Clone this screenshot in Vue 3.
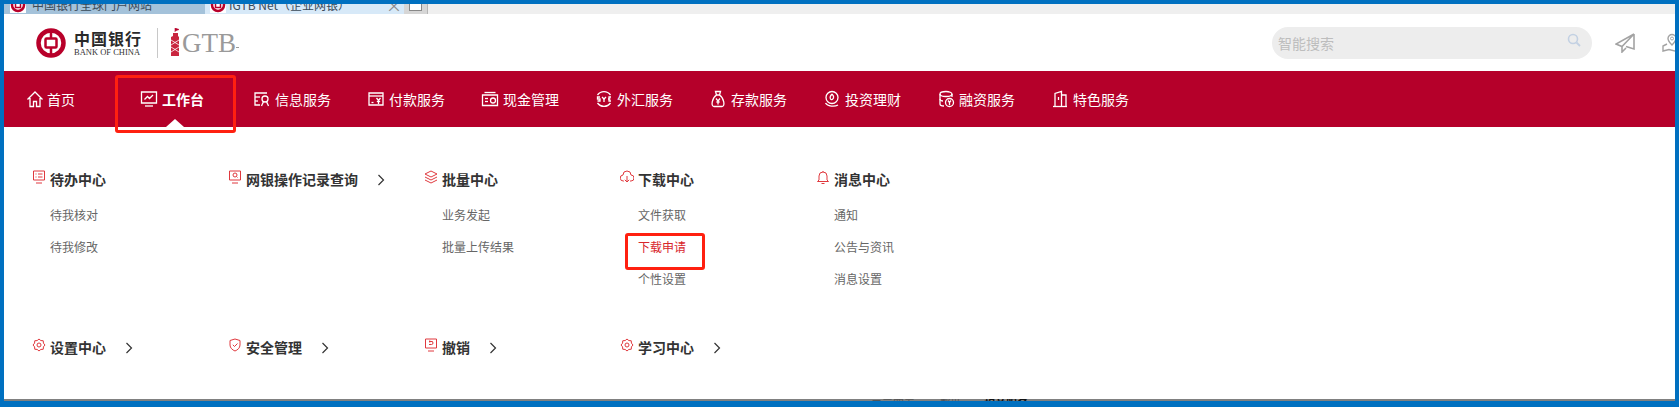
<script setup>
const gear = ['M13 7L11.430 8.840 11.240 11.240 8.840 11.430 7 13 5.160 11.430 2.760 11.240 2.570 8.840 1 7 2.570 5.160 2.760 2.760 5.160 2.570 7 1 8.840 2.570 11.240 2.760 11.430 5.160z', 'M5 7a2 2 0 1 0 4 0a2 2 0 1 0-4 0']

const navItems = [
  { label: '信息服务', icon: ['M14 3H2v12h5', 'M2 7h5', 'M2 11h3', 'M9 9a3 3 0 1 0 6 0a3 3 0 1 0-6 0', 'M8.500 16l2-4.500', 'M15.500 16l-2-4.500'] },
  { label: '付款服务', icon: ['M2 3h14v12H2z', 'M2 6h14', 'M4.500 12.500h2', 'M9.500 8l2 2.500 2-2.500', 'M11.500 10.500V14', 'M9.800 11.500h3.400'] },
  { label: '现金管理', icon: ['M3.500 2.500h11', 'M1.500 5h15v10.500h-15z', 'M4 8.500h3', 'M4 11.500h3', 'M9.500 10.500a2.500 2.500 0 1 0 5 0a2.500 2.500 0 1 0-5 0'] },
  { label: '外汇服务', icon: ['M2.500 5a8 8 0 0 1 13 0', 'M2.500 13a8 8 0 0 0 13 0', 'M5 7H2.500v2H5v2H2.500', 'M7 7l2 2 2-2', 'M9 9v3', 'M16 7h-2v4h2', 'M13 9h2.500'] },
  { label: '存款服务', icon: ['M6.500 1.500h5l-1 3.500h-3z', 'M7.500 5C3 8 1.500 16.500 5 16.500h8c3.500 0 2-8.500-2.500-11.500', 'M7 8.500l2 2.500 2-2.500', 'M9 11v3.500', 'M7.300 12h3.400'] },
  { label: '投资理财', icon: ['M3 7.500a6 6 0 1 1 12 0a6 6 0 0 1-12 0', 'M9 4c-2 2-2.500 3-1.500 5 1 1.500 2.500 0 3-1', 'M9 4c1.500 1.500 2 2.500 1.500 4', 'M2.500 13c2 3.500 9 4 12.500 2'] },
  { label: '融资服务', icon: ['M3 4a6 2.500 0 1 0 12 0a6 2.500 0 1 0-12 0', 'M3 4v10c0 1.200 2 2 4 2', 'M3 9c0 1 1.500 2 3 2', 'M15 4v3', 'M8.500 12.500a4 4 0 1 0 8 0a4 4 0 1 0-8 0', 'M11 10.500l1.500 2 1.500-2', 'M12.500 12.500v2.500'] },
  { label: '特色服务', icon: ['M2 16.500h14', 'M4 16.500V3.500l6.500-2v15', 'M10.500 5H15v11.500', 'M7.500 7v3'] },
]

const sections = [
  { title: '待办中心', icon: ['M1.500 1h11v9h-11z', 'M4 13h6', 'M3.500 4h1', 'M6 4h4.500', 'M3.500 7h1', 'M6 7h4.500'], links: ['待我核对', '待我修改'] },
  { title: '网银操作记录查询', more: true, icon: ['M1.500 1h11v9h-11z', 'M4 13h6', 'M5 5a2 2 0 1 0 4 0a2 2 0 1 0-4 0', 'M8.500 6.500l1 1'], links: [] },
  { title: '批量中心', icon: ['M7 1l6 3-6 3-6-3z', 'M1 7l6 3 6-3', 'M1 10l6 3 6-3'], links: ['业务发起', '批量上传结果'] },
  { title: '下载中心', icon: ['M4 11H3.500a3 3 0 0 1-.5-6 4 4 0 0 1 8 0 3 3 0 0 1 0 6H10', 'M7 6v6', 'M4.800 9.800L7 12l2.200-2.200'], links: ['文件获取', '下载申请', '个性设置'], active: '下载申请' },
  { title: '消息中心', icon: ['M3 10V6a4 4 0 0 1 8 0v4l1.500 1.500h-11z', 'M5.500 13.500h3', 'M7 2V1'], links: ['通知', '公告与资讯', '消息设置'] },
  { title: '设置中心', more: true, icon: gear, links: [] },
  { title: '安全管理', more: true, icon: ['M7 1l5 1.500V7c0 3-2.500 5-5 6-2.500-1-5-3-5-6V2.500z', 'M4.800 6.800L6.500 8.500l3-3'], links: [] },
  { title: '撤销', more: true, icon: ['M1.500 1h11v9h-11z', 'M4 13h6', 'M5 3.500h3.500', 'M5 3.500l1.200-1', 'M5 3.500l1.200 1', 'M5 6.500h2.500a1.500 1.500 0 0 0 0-3'], links: [] },
  { title: '学习中心', more: true, icon: gear, links: [] },
]
</script>

<template>
  <div class="frame">
    <div class="tabbar">
      <div class="tab tab-one">
        <svg class="favicon" viewBox="0 0 16 16"><circle cx="8" cy="8" r="6" fill="none" stroke="#b8002a" stroke-width="2.500" /><rect x="5.500" y="5.500" width="5" height="5" fill="none" stroke="#b8002a" stroke-width="1.500" /></svg>
        <span>中国银行全球门户网站</span>
      </div>
      <div class="tab tab-two">
        <svg class="favicon" viewBox="0 0 16 16"><circle cx="8" cy="8" r="6" fill="none" stroke="#b8002a" stroke-width="2.500" /><rect x="5.500" y="5.500" width="5" height="5" fill="none" stroke="#b8002a" stroke-width="1.500" /></svg>
        <span>IGTB Net（企业网银）</span>
        <span class="close">×</span>
      </div>
      <div class="newtab"><i></i></div>
    </div>

    <header class="top">
      <div class="logo">
        <svg class="boc" viewBox="0 0 30 30">
          <circle cx="15" cy="15" r="12.500" fill="none" stroke="#b8002a" stroke-width="4.500" />
          <rect x="9.500" y="10.500" width="11" height="9" rx="1" fill="none" stroke="#b8002a" stroke-width="2.500" />
          <path d="M15 2v8M15 20v8" stroke="#b8002a" stroke-width="2.500" />
        </svg>
        <div class="boc-text">
          <div class="boc-cn">中国银行</div>
          <div class="boc-en">BANK OF CHINA</div>
        </div>
        <div class="divider"></div>
        <svg class="tower" viewBox="0 0 9 29">
          <path d="M4 0v4M4 0l4 1.500L4 3" fill="#b8002a" stroke="#b8002a" stroke-width=".6" />
          <path d="M2 5h5v3l1 1v19H0V9l2-1z" fill="#c9253f" />
          <path d="M0 12l8 5M8 12l-8 5M0 19l8 5M8 19l-8 5" stroke="#fff" stroke-width=".8" />
        </svg>
        <div class="gtb">GTB</div>
      </div>
      <div class="search">
        <span class="placeholder">智能搜索</span>
        <svg class="search-icon" viewBox="0 0 14 14"><circle cx="6" cy="6" r="4.500" fill="none" stroke="#c3d1e3" stroke-width="1.600" /><path d="M9.500 9.500L13 13" stroke="#c3d1e3" stroke-width="1.800" /></svg>
      </div>
      <svg class="plane" viewBox="0 0 20 20"><path d="M19 1L1 11l6 2.500L19 1zM7 13.500V19l4-4M19 1v15l-8-2.500" fill="none" stroke="#a3a3a3" stroke-width="1.600" /></svg>
      <svg class="map" viewBox="0 0 20 20"><path d="M10 12C7 9 6 7.500 6 5.500a4 4 0 0 1 8 0c0 2-1 3.500-4 6.500z" fill="none" stroke="#a3a3a3" stroke-width="1.400" /><circle cx="10" cy="5.500" r="1.500" fill="none" stroke="#a3a3a3" /><path d="M5 11l-4 2v5l6-1.500 6 1.500 6-2v-5l-4-1" fill="none" stroke="#a3a3a3" stroke-width="1.400" /></svg>
    </header>

    <nav class="nav">
      <a class="nav-item home">
        <svg class="nav-icon" viewBox="0 0 18 18"><path d="M1.500 9.500L9 2l7.500 7.500M4 8v8.500h3.500v-5h3v5H14V8" /></svg>
        <span>首页</span>
      </a>
      <a class="nav-item current">
        <svg class="nav-icon" viewBox="0 0 18 18"><path d="M1.500 2h15v11h-15z" /><path d="M4.500 9.500l3-3 2 2 3.500-3.500" /><path d="M5 16h8" /></svg>
        <span>工作台</span>
      </a>
      <a v-for="item in navItems" :key="item.label" class="nav-item service">
        <svg class="nav-icon" viewBox="0 0 18 18"><path v-for="d in item.icon" :key="d" :d="d" /></svg>
        <span>{{ item.label }}</span>
      </a>
    </nav>

    <main class="menu">
      <section v-for="s in sections" :key="s.title" class="section">
        <div class="section-title">
          <svg class="menu-icon" viewBox="0 0 14 14"><path v-for="d in s.icon" :key="d" :d="d" /></svg>
          <span>{{ s.title }}</span>
          <svg v-if="s.more" class="chevron" viewBox="0 0 8 12"><path d="M1.500 1l5 5-5 5" /></svg>
        </div>
        <ul v-if="s.links.length" class="links">
          <li v-for="l in s.links" :key="l" :class="{ active: l === s.active }">{{ l }}</li>
        </ul>
      </section>
    </main>

    <div class="spacer"></div>
    <footer class="strip">
      <span>一二三四五</span><span class="mid">帮助</span><span class="dark">相关服务</span>
    </footer>

    <div class="mark mark-nav"></div>
    <div class="mark mark-link"></div>
  </div>
</template>

<style scoped>
.frame {
  position: relative;
  box-sizing: border-box;
  width: 1679px;
  height: 407px;
  display: flex;
  flex-direction: column;
  overflow: hidden;
  background: #fff;
  border: solid #0070c0;
  border-width: 4px 4px 6px;
  font-family: "Noto Sans CJK SC", "Liberation Sans", sans-serif;
}
.tabbar {
  display: flex;
  flex: none;
  height: 10px;
  overflow: hidden;
  background: #efefef;
  color: #3a4a58;
  font-size: 12px;
  line-height: 14px;
}
.tab {
  display: flex;
  align-items: flex-start;
  box-sizing: border-box;
  height: 10px;
  flex: none;
}
.tab span { margin-top: -6px; }
.tab-one {
  width: 201px;
  padding-left: 6px;
  background: #a4c2da;
}
.tab-two {
  position: relative;
  width: 199px;
  padding-left: 5px;
  background: #d7e9f8;
}
.tab-two .favicon { margin-right: 3px; }
.favicon {
  width: 16px;
  height: 16px;
  flex: none;
  margin: -7px 6px 0 0;
  background: #fff;
}
.tab-two .close {
  margin-left: auto;
  margin-right: 2px;
  color: #8a8a8a;
  font-size: 16px;
}
.newtab {
  width: 23px;
  height: 10px;
  background: #d6d6d6;
  border-right: 1px solid #b5b5b5;
  flex: none;
}
.newtab i {
  display: block;
  width: 11px;
  height: 6px;
  margin-left: 5px;
  background: #fff;
  border: 1px solid #888;
  border-top: 0;
}
.top {
  display: flex;
  flex: none;
  align-items: center;
  height: 57px;
  padding-left: 32px;
}
.logo {
  display: flex;
  align-items: center;
}
.boc {
  width: 30px;
  height: 30px;
}
.boc-text {
  margin-left: 8px;
  width: 70px;
}
.boc-cn {
  color: #2a2a2a;
  font-size: 16px;
  font-weight: 700;
  letter-spacing: 1px;
  line-height: 20px;
}
.boc-en {
  color: #333;
  font-family: "Liberation Serif", serif;
  font-size: 8.500px;
  line-height: 9px;
  white-space: nowrap;
}
.divider {
  width: 1px;
  height: 30px;
  margin-left: 13px;
  background: #c8c8c8;
}
.tower {
  width: 9px;
  height: 29px;
  margin-left: 13px;
}
.gtb {
  position: relative;
  margin-left: 2px;
  color: #9a9a9a;
  font-family: "Liberation Serif", serif;
  font-size: 27px;
  line-height: 30px;
}
.gtb::after {
  content: "";
  position: absolute;
  left: 100%;
  top: 19px;
  width: 3px;
  height: 1px;
  background: #9a9a9a;
}
.search {
  display: flex;
  align-items: center;
  justify-content: space-between;
  box-sizing: border-box;
  width: 320px;
  height: 32px;
  margin-left: auto;
  padding: 0 11px 0 6px;
  background: #ededed;
  border-radius: 16px;
}
.placeholder {
  color: #bdbdbd;
  font-size: 14px;
}
.search-icon {
  width: 14px;
  height: 14px;
  margin-top: -5px;
}
.plane {
  width: 20px;
  height: 20px;
  flex: none;
  margin-left: 23px;
}
.map {
  width: 20px;
  height: 20px;
  flex: none;
  margin: 0 -7px 0 27px;
}
.nav {
  display: flex;
  flex: none;
  align-items: center;
  height: 56px;
  padding: 0 0 0 22px;
  background: #b5002a;
  color: #fff;
  font-size: 14px;
}
.nav-item {
  position: relative;
  display: flex;
  align-items: center;
  white-space: nowrap;
}
.nav-icon {
  width: 18px;
  height: 18px;
  flex: none;
  margin-right: 4px;
  fill: none;
  stroke: #fff;
  stroke-width: 1.300;
}
.home { width: 114px; }
.home .nav-icon { margin-right: 3px; }
.current {
  width: 113px;
  font-weight: 700;
}
.current::after {
  content: "";
  position: absolute;
  left: 26px;
  top: 30px;
  border: solid transparent;
  border-width: 0 9px 8px;
  border-bottom-color: #fff;
}
.service { width: 114px; }
.menu {
  display: grid;
  grid-template-columns: repeat(5, 196px);
  row-gap: 42px;
  padding: 42px 0 0 28px;
}
.section-title {
  display: flex;
  align-items: center;
  color: #333;
  font-size: 14px;
  font-weight: 700;
  line-height: 20px;
  white-space: nowrap;
}
.menu-icon {
  width: 14px;
  height: 14px;
  flex: none;
  margin: -4px 4px 0 0;
  fill: none;
  stroke: #e0393e;
  stroke-width: 1;
}
.chevron {
  width: 8px;
  height: 12px;
  margin: 1px 0 0 19px;
  fill: none;
  stroke: #333;
  stroke-width: 1.200;
}
.links {
  margin: 10px 0 0;
  padding: 0 0 0 18px;
  list-style: none;
  color: #666;
  font-size: 12px;
  line-height: 32px;
}
.links .active { color: #d8262c; }
.spacer { flex: 1; }
.strip {
  display: flex;
  flex: none;
  height: 2px;
  overflow: hidden;
  padding-left: 856px;
  background: #808080;
  color: #555;
  font-size: 11px;
  line-height: 14px;
}
.strip span { margin-top: -3px; }
.strip .mid { margin-left: 25px; }
.strip .dark { margin-left: 22px; color: #111; font-weight: 700; }
.mark {
  position: absolute;
  box-sizing: border-box;
  border: 3px solid #ff2010;
  border-radius: 3px;
}
.mark-nav {
  left: 111px;
  top: 71px;
  width: 121px;
  height: 58px;
}
.mark-link {
  left: 621px;
  top: 229px;
  width: 80px;
  height: 37px;
}
</style>

<style>
html, body { margin: 0; background: #fff; }
</style>
